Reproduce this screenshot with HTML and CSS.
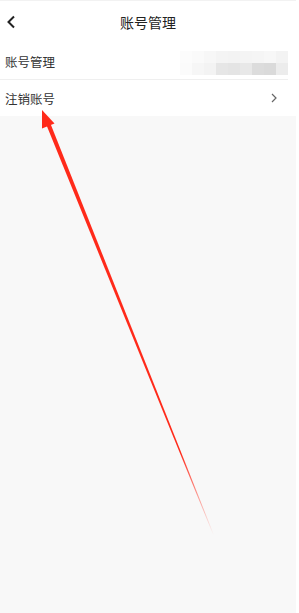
FILE: index.html
```html
<!DOCTYPE html>
<html lang="zh-CN">
<head>
    <meta charset="UTF-8">
    <meta name="viewport" content="width=device-width, initial-scale=1.0">
    <title>账号管理</title>
    <link rel="stylesheet" href="styles.css">
</head>
<body>
    <div class="screen">
        <div class="nav-bar">
            <span class="nav-back">
                <svg width="10" height="14" viewBox="0 0 10 14"><path d="M8 1.5 L2.5 7 L8 12.5" fill="none" stroke="#222" stroke-width="2"/></svg>
            </span>
            <span class="nav-title">账号管理</span>
        </div>

        <div class="list">
            <div class="list-item">
                <span class="item-label">账号管理</span>
                <div class="mosaic">
                    <div class="mosaic-row">
                        <i style="background:#fcfcfc"></i><i style="background:#fafafa"></i><i style="background:#f7f7f7"></i><i style="background:#f4f4f4"></i><i style="background:#f3f3f3"></i><i style="background:#f4f4f4"></i><i style="background:#f5f5f5"></i><i style="background:#f7f7f7"></i><i style="background:#f3f3f3"></i>
                    </div>
                    <div class="mosaic-row">
                        <i style="background:#fbfbfb"></i><i style="background:#f6f6f6"></i><i style="background:#f3f3f3"></i><i style="background:#e6e6e6"></i><i style="background:#e4e4e4"></i><i style="background:#e8e8e8"></i><i style="background:#dcdcdc"></i><i style="background:#dadada"></i><i style="background:#ececec"></i>
                    </div>
                </div>
            </div>
            <div class="list-item">
                <span class="item-label">注销账号</span>
                <svg class="item-arrow" width="6" height="10" viewBox="0 0 6 10"><path d="M1 1 L5 5 L1 9" fill="none" stroke="#666" stroke-width="1.2"/></svg>
            </div>
        </div>

        <svg class="annotation" width="296" height="613" viewBox="0 0 296 613">
            <defs>
                <linearGradient id="fade" x1="44" y1="120" x2="214" y2="535" gradientUnits="userSpaceOnUse">
                    <stop offset="0" stop-color="#ff2a1a"/>
                    <stop offset="0.8" stop-color="#ff2a1a"/>
                    <stop offset="1" stop-color="#ff2a1a" stop-opacity="0"/>
                </linearGradient>
            </defs>
            <polygon points="45.2,122 49.2,120.5 214,535 213.3,535.2" fill="url(#fade)"/>
            <polygon points="42,110 54.5,123.5 42,128.5" fill="#ff2a1a"/>
        </svg>
    </div>
</body>
</html>
```

FILE: styles.css
```css
body {
    margin: 0;
    background: #ffffff;
    font-family: "Noto Sans CJK SC", "Noto Sans", sans-serif;
    color: #333333;
}

.screen {
    position: relative;
    width: 296px;
    height: 613px;
    background: #f8f8f8;
    overflow: hidden;
}

.nav-bar {
    position: relative;
    height: 42px;
    display: flex;
    align-items: center;
    justify-content: center;
    background: #ffffff;
    border-top: 1px solid #f2f2f2;
}

.nav-back {
    position: absolute;
    left: 6px;
    top: 14px;
    display: flex;
}

.nav-title {
    font-size: 14px;
    color: #222222;
}

.list {
    background: #ffffff;
}

.list-item {
    height: 36px;
    display: flex;
    align-items: center;
    justify-content: space-between;
    padding: 0 14px 0 5px;
    border-bottom: 1px solid #efefef;
    margin-right: 8px;
}

.list-item:last-child {
    border-bottom: none;
}

.item-label {
    font-size: 12.5px;
    color: #333333;
}

.mosaic {
    display: flex;
    flex-direction: column;
    margin-right: -14px;
    margin-top: 4px;
}

.mosaic-row {
    display: flex;
}

.mosaic-row i {
    display: block;
    width: 12px;
    height: 12px;
}

.item-arrow {
    margin-right: -3px;
}

.annotation {
    position: absolute;
    left: 0;
    top: 0;
    pointer-events: none;
}
```
